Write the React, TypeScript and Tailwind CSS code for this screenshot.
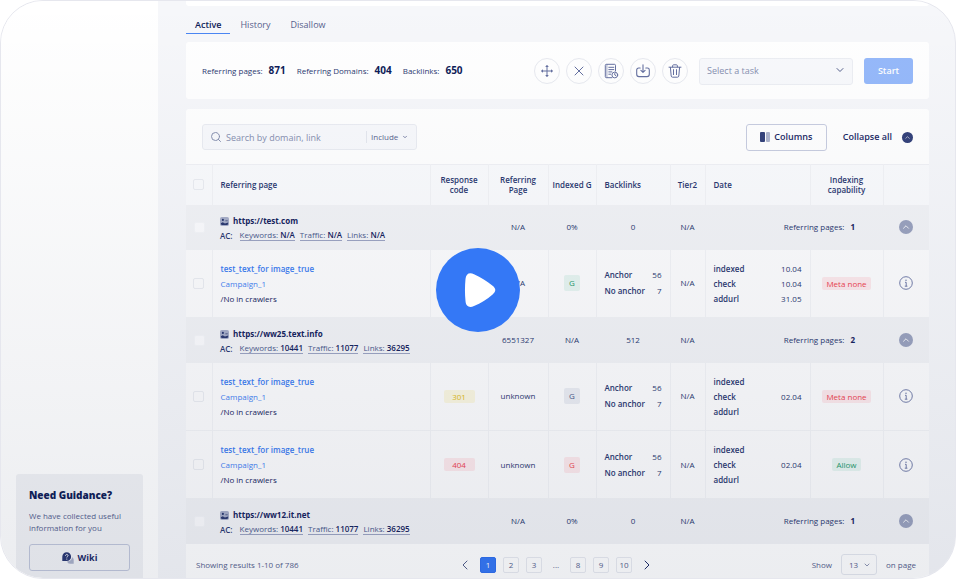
import React from 'react';
import { ChevronDown, ChevronLeft, ChevronRight, ChevronUp, Search, X } from 'lucide-react';

type Tone = 'green' | 'red' | 'yellow' | 'gray';

const tones: Record<Tone, string> = {
  green: 'bg-[#e6f4f0] text-[#1f9a6c]',
  red: 'bg-[#fce8eb] text-[#ee4450]',
  yellow: 'bg-[#faf6e0] text-[#e2bd1c]',
  gray: 'bg-[#eaecf2] text-[#4c5788]',
};

const tabs = ['Active', 'History', 'Disallow'];

const totals = [
  { label: 'Referring pages:', value: 871 },
  { label: 'Referring Domains:', value: 404 },
  { label: 'Backlinks:', value: 650 },
];

type Group = {
  url: string;
  keywords: string;
  traffic: string;
  links: string;
  page: string;
  indexed: string;
  backlinks: string;
  count: number;
  rows: Row[];
};

type Row = {
  code: string;
  codeTone: Tone;
  page: string;
  gTone: Tone;
  dates: string[];
  capability: string;
  capTone: Tone;
};

const groups: Group[] = [
  {
    url: 'https://test.com', keywords: 'N/A', traffic: 'N/A', links: 'N/A',
    page: 'N/A', indexed: '0%', backlinks: '0', count: 1,
    rows: [
      { code: '', codeTone: 'green', page: 'N/A', gTone: 'green', dates: ['10.04', '10.04', '31.05'], capability: 'Meta none', capTone: 'red' },
    ],
  },
  {
    url: 'https://ww25.text.info', keywords: '10441', traffic: '11077', links: '36295',
    page: '6551327', indexed: 'N/A', backlinks: '512', count: 2,
    rows: [
      { code: '301', codeTone: 'yellow', page: 'unknown', gTone: 'gray', dates: ['02.04'], capability: 'Meta none', capTone: 'red' },
      { code: '404', codeTone: 'red', page: 'unknown', gTone: 'red', dates: ['02.04'], capability: 'Allow', capTone: 'green' },
    ],
  },
  {
    url: 'https://ww12.it.net', keywords: '10441', traffic: '11077', links: '36295',
    page: 'N/A', indexed: '0%', backlinks: '0', count: 1,
    rows: [],
  },
];

const MoveIcon = () => (
  <svg viewBox="0 0 14 14" className="size-[14px]" fill="none" stroke="currentColor" strokeWidth="1">
    <path d="M7 2.5v9M2.5 7h9" />
    <path d="M7 .8 5.2 3h3.6ZM7 13.2 5.2 11h3.6ZM.8 7 3 5.2v3.6ZM13.2 7 11 5.2v3.6Z" fill="currentColor" stroke="none" />
  </svg>
);

const ReportIcon = () => (
  <svg viewBox="0 0 16 16" className="size-[16px]" fill="none" stroke="currentColor" strokeWidth="1" strokeLinecap="round">
    <path d="M12.5 8V2.3c0-.6-.4-1-1-1H3.3c-.6 0-1 .4-1 1v11.4c0 .6.4 1 1 1h5.5" />
    <path d="M3.9 1.4v13.2" strokeWidth=".6" />
    <path d="M5.8 4.3h5M5.8 6.6h5M5.8 8.9h3M5.8 11.2h1.8" />
    <circle cx="11.8" cy="12" r="2.9" />
    <path d="M11.8 10.5V12l1 .6" />
  </svg>
);

const DownloadIcon = () => (
  <svg viewBox="0 0 14 14" className="size-[14px]" fill="none" stroke="currentColor" strokeWidth="1.1" strokeLinecap="round" strokeLinejoin="round">
    <path d="M4.2 4H2.6C1.5 4 .7 4.8.7 5.9v4.400c0 1.300 1 2.300 2.300 2.300h8c1.300 0 2.300-1 2.300-2.300V5.900C13.300 4.800 12.500 4 11.400 4H9.800" />
    <path d="M7 .8v7.400M4.900 6.300 7 8.400l2.100-2.100" />
  </svg>
);

const TrashIcon = () => (
  <svg viewBox="0 0 14 14" className="size-[14px]" fill="none" stroke="currentColor" strokeWidth="1" strokeLinecap="round" strokeLinejoin="round">
    <path d="M1 3.200h12M4.600 3V1.800c0-.6.4-1 1-1h2.800c.6 0 1 .4 1 1V3M2.400 3.400l.8 8.600c.1.700.6 1.200 1.300 1.200h5c.7 0 1.200-.5 1.300-1.200l.8-8.600M5.500 5.600v5M8.500 5.600v5" />
  </svg>
);

const InfoIcon = () => (
  <svg viewBox="0 0 14 14" className="size-[14px]" fill="none" stroke="currentColor" strokeWidth=".9">
    <circle cx="7" cy="7" r="6.300" />
    <path d="M6 6.300h1.200v3.900M5.800 10.200h2.600" />
    <circle cx="7" cy="4.200" r=".7" fill="currentColor" stroke="none" />
  </svg>
);

const ImageIcon = () => (
  <svg viewBox="0 0 10 10" className="size-[9px]">
    <rect width="10" height="10" rx="2" fill="#a7aec8" />
    <path d="M1 7 3 5.800l2.500 1.400L9 6v1.500A1.500 1.500 0 0 1 7.500 9h-5A1.500 1.500 0 0 1 1 7.500Z" fill="#2c3a70" />
    <circle cx="3.200" cy="3.200" r="1.200" fill="#2c3a70" />
    <path d="M6 3.600h2.600v1.200H6Z" fill="#5c678f" />
  </svg>
);

const WikiIcon = () => (
  <svg viewBox="0 0 12 12" className="size-[12px]">
    <path d="M11.700 11.700H8.200A3.300 3.300 0 0 1 5 9.500c3-.2 5-2 5.200-4.300 1 .6 1.500 1.500 1.500 2.900Z" fill="#a9b0c8" />
    <path d="M4.700.3A4.400 4.400 0 0 1 4.700 9.100H.3V4.700A4.400 4.400 0 0 1 4.700.3Z" fill="#2a3872" />
    <path d="M3.500 3.700c0-1.700 2.500-1.600 2.500-.1 0 .9-1.200.9-1.200 1.900" fill="none" stroke="#fff" strokeWidth=".9" />
    <circle cx="4.800" cy="7" r=".6" fill="#fff" />
  </svg>
);

const actions = [
  { label: 'Move', icon: <MoveIcon /> },
  { label: 'Cancel', icon: <X size={16} strokeWidth={1.5} /> },
  { label: 'Report', icon: <ReportIcon /> },
  { label: 'Download', icon: <DownloadIcon /> },
  { label: 'Delete', icon: <TrashIcon /> },
];

const Check = ({ label, inGroup = false }: { label: string; inGroup?: boolean }) => (
  <input
    type="checkbox"
    aria-label={label}
    className={`block size-[11px] mx-auto appearance-none rounded-[2px] border ${inGroup ? 'border-[#f4f5f8] bg-[#fbfbfd]' : 'border-[#eaecf1] bg-transparent'}`}
  />
);

const Badge = ({ tone, wide = false, children }: { tone: Tone; wide?: boolean; children: React.ReactNode }) => (
  <span className={`inline-block rounded-[2px] text-center leading-[13px] ${wide ? 'w-[31px]' : 'px-1'} ${tones[tone]}`}>{children}</span>
);

const Stat = ({ label, value }: { label: string; value: string }) => (
  <a href="#" className="border-b border-[#9ca4c2] text-[#4c5a8c]">
    {label}: <span className="font-semibold text-[#16245e]">{value}</span>
  </a>
);

const GroupRow = ({ group }: { group: Group }) => (
  <tr className="h-[45px] bg-[#f2f3f6]">
    <td><Check label={`Select ${group.url}`} inGroup /></td>
    <td colSpan={2} className="pl-2 leading-4">
      <div className="flex items-center gap-1 font-bold text-[#16245e]">
        <ImageIcon />
        {group.url}
      </div>
      <div className="flex items-center gap-[5px] leading-[11px] whitespace-nowrap">
        <span className="mr-[2px] font-semibold">AC:</span>
        <Stat label="Keywords" value={group.keywords} />
        <Stat label="Traffic" value={group.traffic} />
        <Stat label="Links" value={group.links} />
      </div>
    </td>
    <td className="text-center">{group.page}</td>
    <td className="text-center">{group.indexed}</td>
    <td className="text-center">{group.backlinks}</td>
    <td className="text-center">N/A</td>
    <td colSpan={2} className="pr-7 text-right font-medium">
      Referring pages: <b className="ml-1 text-[#16245e]">{group.count}</b>
    </td>
    <td>
      <button aria-label="Collapse group" className="mx-auto grid size-[14px] place-items-center rounded-full bg-[#9aa2be] text-white">
        <ChevronUp size={10} strokeWidth={2} />
      </button>
    </td>
  </tr>
);

const DataRow = ({ row }: { row: Row }) => (
  <tr className="h-[68px] border-b border-[#f2f3f6] bg-[#fcfcfd] [&>td]:border-r [&>td]:border-[#f2f3f6] [&>td:last-child]:border-r-0">
    <td><Check label="Select page" /></td>
    <td className="pl-2 leading-[15px]">
      <a href="#" className="block font-semibold text-[#3a7bf0]">test_text_for image_true</a>
      <a href="#" className="block font-medium text-[#4582f2]">Campaign_1</a>
      <div className="font-medium text-[#16245e]">/No in crawlers</div>
    </td>
    <td className="text-center">{row.code && <Badge tone={row.codeTone} wide>{row.code}</Badge>}</td>
    <td className="text-center">{row.page}</td>
    <td>
      <span className={`mx-auto grid size-4 place-items-center rounded-[2px] font-medium ${tones[row.gTone]}`}>G</span>
    </td>
    <td className="px-2 leading-4">
      <div className="flex justify-between"><span className="font-semibold">Anchor</span><span>56</span></div>
      <div className="flex justify-between"><span className="font-semibold">No anchor</span><span>7</span></div>
    </td>
    <td className="text-center">N/A</td>
    <td className="px-2 leading-[15px]">
      <div className="flex items-center justify-between">
        <div className="font-semibold">
          <div>indexed</div>
          <div>check</div>
          <div>addurl</div>
        </div>
        <div>{row.dates.map((date, i) => <div key={i}>{date}</div>)}</div>
      </div>
    </td>
    <td className="text-center"><Badge tone={row.capTone}>{row.capability}</Badge></td>
    <td>
      <button aria-label="Details" className="mx-auto block text-[#6570a0]"><InfoIcon /></button>
    </td>
  </tr>
);

const Sidebar = () => (
  <aside className="flex w-[157px] shrink-0 flex-col justify-end bg-white pr-[15px] pl-[15px]">
    <div className="rounded-t-[3px] bg-[#f1f2f5] px-[13px] pt-[13px] pb-[7px]">
      <h2 className="text-[10px] leading-4 font-extrabold text-[#0f1d58]">Need Guidance?</h2>
      <p className="mt-[7px] mb-[10px] text-[8px] leading-3 text-[#56628f]">
        We have collected useful information for you
      </p>
      <button className="flex h-[27px] w-full items-center justify-center gap-1 rounded-[3px] border border-[#c0c6da] text-[9px] font-bold text-[#1d2b66]">
        <WikiIcon />
        Wiki
      </button>
    </div>
  </aside>
);

const TaskBar = () => (
  <section className="mt-2 flex h-[57px] shrink-0 items-center justify-between rounded-[3px] bg-white px-4">
    <div className="flex items-center gap-[11px] text-[8px] font-medium">
      {totals.map((t) => (
        <div key={t.label} className="flex items-center gap-[6px]">
          {t.label}
          <b className="text-[10px] font-bold text-[#0f1d58]">{t.value}</b>
        </div>
      ))}
    </div>
    <div className="flex items-center">
      <div className="mr-[11px] flex gap-[6px]">
        {actions.map((a) => (
          <button key={a.label} aria-label={a.label} className="grid size-[26px] place-items-center rounded-full border border-[#e8eaf0] text-[#6570a0]">
            {a.icon}
          </button>
        ))}
      </div>
      <div className="relative mr-[11px]">
        <select aria-label="Task" className="h-[27px] w-[154px] appearance-none rounded-[3px] border border-[#eceef3] bg-[#f8f9fc] pl-[7px] text-[9px] text-[#8790b0]">
          <option>Select a task</option>
        </select>
        <ChevronDown size={12} strokeWidth={2} className="pointer-events-none absolute top-2 right-[7px] text-[#56618c]" />
      </div>
      <button className="h-[26px] w-[49px] rounded-[3px] bg-[#96b9fa] text-[9px] font-semibold text-white">Start</button>
    </div>
  </section>
);

const Toolbar = () => (
  <div className="flex h-[55px] items-center justify-between px-4 pt-px">
    <div className="flex h-[26px] w-[215px] items-center rounded-[3px] border border-[#eaecf2] bg-[#f8f9fc]">
      <Search size={12} strokeWidth={2} className="ml-[7px] shrink-0 text-[#8790b0]" />
      <input aria-label="Search" placeholder="Search by domain, link" className="ml-1 h-full min-w-0 flex-1 bg-transparent text-[9px] outline-none placeholder:text-[#8790b0]" />
      <div className="relative border-l border-[#e4e7ee]">
        <select aria-label="Search mode" className="block w-[49px] appearance-none pl-1 text-[8px] leading-3 text-[#5b668f]">
          <option>Include</option>
        </select>
        <ChevronDown size={6} strokeWidth={3} className="pointer-events-none absolute top-[3px] right-2 text-[#5b668f]" />
      </div>
    </div>
    <div className="flex items-center gap-4 text-[9px] font-semibold text-[#1d2b66]">
      <button className="flex h-[27px] w-[81px] items-center justify-center gap-1 rounded-[3px] border border-[#c8cde0]">
        <span className="flex gap-px">
          <span className="h-[10px] w-[5px] rounded-[1px] bg-[#35437b]" />
          <span className="h-[10px] w-[4px] rounded-[1px] bg-[#aeb5cd]" />
        </span>
        Columns
      </button>
      <button className="flex items-center gap-[10px]">
        Collapse all
        <span className="grid size-[11px] place-items-center rounded-full bg-[#35437b] text-white">
          <ChevronUp size={7} strokeWidth={2} />
        </span>
      </button>
    </div>
  </div>
);

const Pagination = () => (
  <footer className="grid h-9 grid-cols-[1fr_auto_1fr] items-center pt-[6px] pr-[13px] pl-[10px] text-[8px] text-[#56618c]">
    <div>Showing results 1-10 of 786</div>
    <nav className="flex items-center gap-[7px]">
      <button aria-label="Previous"><ChevronLeft size={16} strokeWidth={1.5} /></button>
      {['1', '2', '3', '...', '8', '9', '10'].map((p) =>
        p === '...' ? (
          <span key={p} className="w-[14px] text-center">...</span>
        ) : (
          <button
            key={p}
            className={`size-4 rounded-[2px] border ${p === '1' ? 'border-[#2f6fee] bg-[#3577f4] text-white' : 'border-[#e8eaf0]'}`}
          >
            {p}
          </button>
        )
      )}
      <button aria-label="Next" className="text-[#1d2b66]"><ChevronRight size={16} strokeWidth={1.5} /></button>
    </nav>
    <div className="flex items-center justify-end gap-[9px]">
      <label htmlFor="per-page">Show</label>
      <div className="relative">
        <select id="per-page" className="block h-[21px] w-9 appearance-none rounded-[3px] border border-[#e4e7ee] pl-[7px]">
          <option>13</option>
        </select>
        <ChevronDown size={8} className="pointer-events-none absolute top-[7px] right-[6px]" />
      </div>
      <span>on page</span>
    </div>
  </footer>
);

export default function App() {
  return (
    <div className="relative flex h-screen overflow-hidden rounded-[43px] border border-[#e6e7ee] bg-[#f6f7fa] font-['Open_Sans',sans-serif] text-[#2b3970]">
      <Sidebar />
      <main className="flex min-w-0 flex-1 flex-col pr-[26px] pl-7">
        <div className="h-[5px] shrink-0 rounded-b-[3px] bg-white" />
        <nav className="mt-[9px] flex h-[19px] shrink-0 text-[9px] leading-5 font-medium text-[#56618c]">
          {tabs.map((tab) => (
            <a
              key={tab}
              href="#"
              className={tab === 'Active' ? 'border-b border-[#4a86f3] px-[9px] font-semibold text-[#0f1d58]' : 'px-[10px]'}
            >
              {tab}
            </a>
          ))}
        </nav>
        <TaskBar />
        <section className="mt-[10px] shrink-0 rounded-[3px] bg-white">
          <Toolbar />
          <table className="w-full table-fixed border-collapse text-[8px]">
            <colgroup>
              <col className="w-[26px]" />
              <col />
              <col className="w-[58px]" />
              <col className="w-[60px]" />
              <col className="w-[48px]" />
              <col className="w-[74px]" />
              <col className="w-[35px]" />
              <col className="w-[105px]" />
              <col className="w-[73px]" />
              <col className="w-[46px]" />
            </colgroup>
            <thead>
              <tr className="h-10 border-t border-[#f0f1f5] bg-[#fafbfd] leading-[10px] [&>th]:border-r [&>th]:border-[#f2f3f6] [&>th]:font-semibold [&>th:last-child]:border-r-0">
                <th><Check label="Select all" /></th>
                <th className="pl-2 text-left">Referring page</th>
                <th>Response<br />code</th>
                <th>Referring<br />Page</th>
                <th className="whitespace-nowrap">Indexed G</th>
                <th className="pl-2 text-left">Backlinks</th>
                <th>Tier2</th>
                <th className="pl-2 text-left">Date</th>
                <th>Indexing<br />capability</th>
                <th />
              </tr>
            </thead>
            <tbody>
              {groups.map((group) => (
                <React.Fragment key={group.url}>
                  <GroupRow group={group} />
                  {group.rows.map((row, i) => <DataRow key={i} row={row} />)}
                </React.Fragment>
              ))}
            </tbody>
          </table>
          <Pagination />
        </section>
      </main>

      {/* shade over the preview, stronger towards the bottom */}
      <div className="pointer-events-none absolute inset-0 bg-linear-to-b from-[#0e1e46]/0 to-[#0e1e46]/8" />
      <div className="pointer-events-none absolute inset-0 grid place-items-center">
        <button aria-label="Play video" className="pointer-events-auto grid size-[84px] place-items-center rounded-full bg-[#3478f6]">
          <svg viewBox="0 0 84 84" className="size-full" fill="#fff">
            <path d="M29.500 31C30 25.500 33.500 24.200 38 26.200c7 3 13 6.800 18.600 11.600 3.600 3 3.600 5.600 0 8.600C51 51.200 45 55 38 58c-4.500 2-8 .7-8.500-5-.7-7.500-.7-14.500 0-22Z" />
          </svg>
        </button>
      </div>
    </div>
  );
}
